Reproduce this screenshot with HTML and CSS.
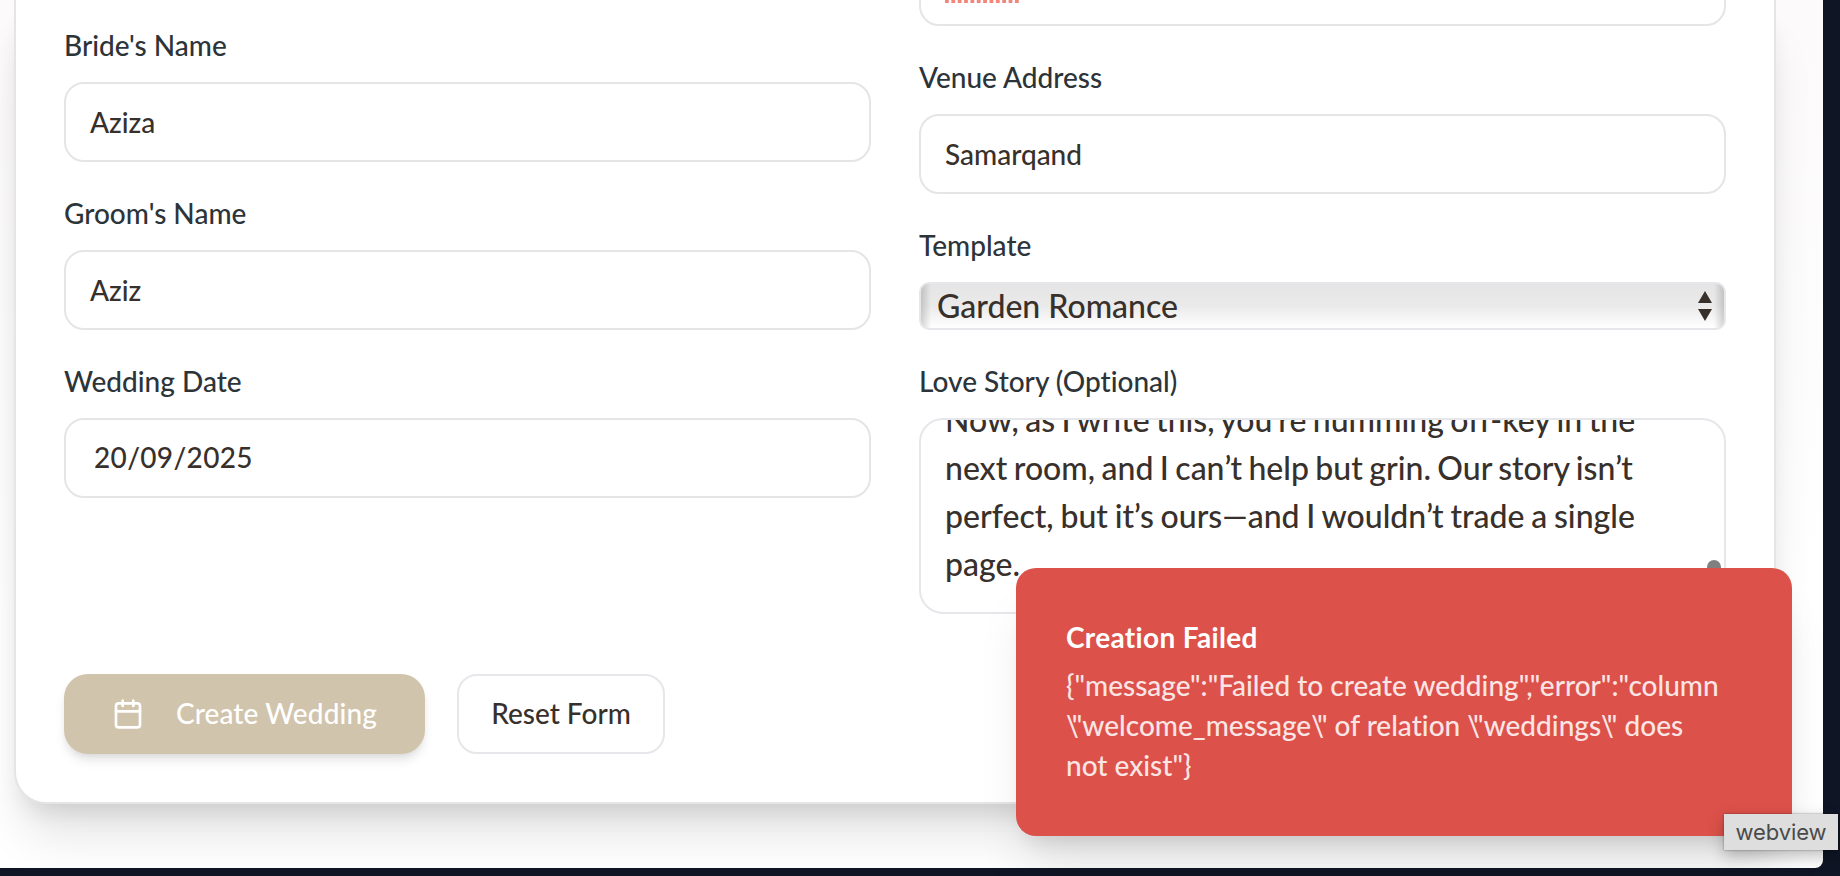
FILE: index.html
```html
<!DOCTYPE html>
<html lang="en">
<head>
<meta charset="utf-8">
<title>Create Wedding</title>
<link rel="stylesheet" href="styles.css">
</head>
<body>
<main class="page">
  <form class="card">
    <div class="columns">
      <div class="column column-left">
        <div class="field"><label class="label">Bride's Name</label><div class="input">Aziza</div></div>
        <div class="field"><label class="label">Groom's Name</label><div class="input">Aziz</div></div>
        <div class="field"><label class="label">Wedding Date</label><div class="input date">20/09/2025</div></div>
      </div>
      <div class="column column-right">
        <div class="input venue"><svg class="spelling" width="76" height="3" viewBox="0 0 76 3"><path d="M0 1.5H74.5" stroke="#f3867b" stroke-width="3" stroke-dasharray="3.8 2.56"/></svg></div>
        <div class="field"><label class="label">Venue Address</label><div class="input">Samarqand</div></div>
        <div class="field"><label class="label">Template</label>
          <div class="select"><span>Garden Romance</span><svg width="14" height="30" viewBox="0 0 14 30" fill="#38302b"><path d="M7 0L14 12H0zM0 18H14L7 30z"/></svg></div>
        </div>
        <div class="field"><label class="label">Love Story (Optional)</label>
          <div class="textarea"><p class="story">Now, as I write this, you<span class="apos">’</span>re humming off-key in the<br>next room, and I can<span class="apos">’</span>t help but grin. Our story isn<span class="apos">’</span>t<br><span class="loose">perfect, but it<span class="apos">’</span>s ours—and I wouldn<span class="apos">’</span>t trade a single</span><br>page.</p><span class="thumb"></span></div>
        </div>
      </div>
    </div>
    <div class="actions">
      <button type="button" class="button primary"><svg width="32" height="32" viewBox="0 0 24 24" fill="none" stroke="currentColor" stroke-width="2" stroke-linecap="round" stroke-linejoin="round"><path d="M8 2v4M16 2v4M3 10h18"/><rect x="3" y="4" width="18" height="18" rx="2"/></svg><span class="caption">Create Wedding</span></button>
      <button type="button" class="button outline"><span class="caption">Reset Form</span></button>
    </div>
  </form>
</main>
<div class="toast" role="alert">
  <div class="toast-title">Creation Failed</div>
  <div class="toast-text">{"message":"Failed to create wedding","error":"column<br><span class="slash">\</span>"welcome_message<span class="slash">\</span>" of relation <span class="slash">\</span>"weddings<span class="slash">\</span>" does<br>not exist"}</div>
</div>
<div class="tooltip">webview</div>
</body>
</html>
```
FILE: styles.css
```css
* { box-sizing: border-box; }
body {
  margin: 0;
  width: 1840px;
  height: 876px;
  overflow: hidden;
  position: relative;
  background: #0f1524;
  font-family: Lato, "Liberation Sans", sans-serif;
  font-size: 28px;
  font-weight: 500;
  line-height: 40px;
  font-variant-ligatures: none;
  color: #38302b;
}
.page {
  width: 1823px;
  height: 868px;
  padding: 0 47px 0 14px;
  overflow: hidden;
  background: linear-gradient(#fcfafb, #fff 70%);
  border-bottom-right-radius: 8px;
}
.card {
  height: 804px;
  padding: 0 48px;
  background: #fff;
  border: 2px solid #e5e5e5;
  border-top: 0;
  border-radius: 0 0 32px 32px;
  box-shadow: 0 40px 50px -10px rgba(0, 0, 0, .11), 0 16px 24px -10px rgba(0, 0, 0, .12);
}
.columns { display: grid; grid-template-columns: 1fr 1fr; gap: 48px; height: 626px; }
.column { display: flex; flex-direction: column; gap: 32px; }
.column-left { padding-top: 26px; }
.column-right { margin-top: -54px; }
.field { display: flex; flex-direction: column; gap: 16px; }
.label { display: block; height: 40px; line-height: 38px; color: #2d3439; }
.input {
  height: 80px;
  padding: 18px 24px;
  border: 2px solid #e5e5e5;
  border-radius: 20px;
  background: #fff;
}
.input.date { padding: 17px 28px; letter-spacing: .35px; }
.venue { padding: 52px 24px 0; line-height: 0; }
.spelling { display: block; }
.select {
  display: flex;
  align-items: center;
  justify-content: space-between;
  height: 48px;
  padding: 0 12px 0 16px;
  border: 2px solid #e5e7eb;
  border-radius: 10px;
  font-size: 32px;
  background: linear-gradient(90deg, rgba(0,0,0,.16), transparent 10px calc(100% - 10px), rgba(0,0,0,.16)), linear-gradient(#e5e5e5, #eaeaea 50%, #fff);
}
.textarea {
  display: flex;
  position: relative;
  flex-direction: column;
  justify-content: flex-end;
  height: 196px;
  padding: 0 24px 24px;
  overflow: hidden;
  border: 2px solid #e5e7eb;
  border-radius: 24px;
  font-size: 32px;
  line-height: 48px;
}
.story { margin: 0; white-space: nowrap; word-spacing: -1.65px; }
.loose { word-spacing: -1.3px; }
.apos { letter-spacing: -1px; }
.thumb {
  position: absolute;
  top: 140px;
  right: 3px;
  width: 14px;
  height: 40px;
  border-radius: 7px;
  background: #808080;
}
.actions { display: flex; gap: 32px; padding-top: 48px; }
.button {
  display: flex;
  align-items: center;
  justify-content: center;
  height: 80px;
  border: 0;
  border-radius: 24px;
  font: 500 28px/40px Lato, sans-serif;
}
.caption { padding-bottom: 2px; }
.primary {
  width: 361px;
  justify-content: flex-start;
  gap: 32px;
  padding: 0 48px;
  letter-spacing: .1px;
  color: #fff;
  background: #d1c4ad;
  box-shadow: 0 8px 12px -2px rgba(0, 0, 0, .1), 0 4px 8px -4px rgba(0, 0, 0, .1);
}
.outline { width: 208px; color: #38302b; background: #fff; border: 2px solid #e5e7eb; border-radius: 20px; }
.toast {
  position: absolute;
  left: 1016px;
  top: 568px;
  width: 776px;
  height: 268px;
  padding: 49px 50px 50px;
  border-radius: 20px;
  color: #fff;
  background: #dc514a;
  box-shadow: 0 40px 50px -10px rgba(0, 0, 0, .1), 0 16px 20px -12px rgba(0, 0, 0, .1);
}
.toast-title { margin-bottom: 8px; font-weight: 700; letter-spacing: .33px; }
.toast-text { color: #fae5e4; white-space: nowrap; }
.slash { letter-spacing: -7px; }
.tooltip {
  position: absolute;
  left: 1724px;
  top: 814px;
  width: 114px;
  height: 36px;
  color: #4a4a4a;
  background: #dedede;
  box-shadow: 0 0 2px rgba(0, 0, 0, .4), 0 6px 16px rgba(0, 0, 0, .25);
  font: 22px/36px Inter, sans-serif;
  letter-spacing: -.1px;
  text-align: center;
}
```
